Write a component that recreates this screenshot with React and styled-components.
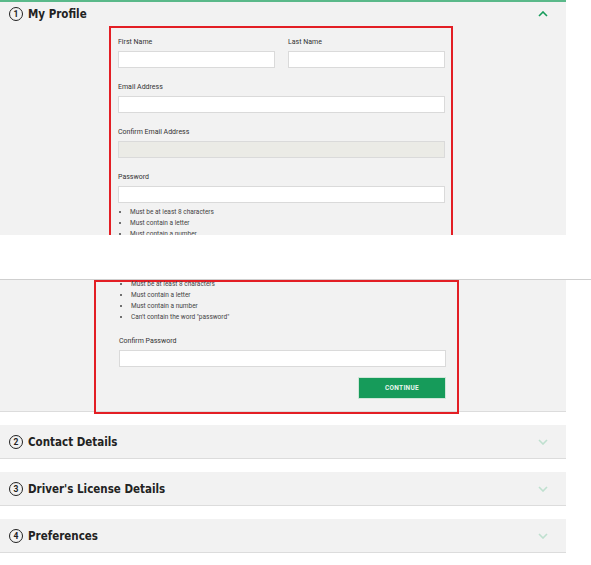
import React from "react";
import styled, { createGlobalStyle } from "styled-components";

const Global = createGlobalStyle`
  html, body { margin: 0; padding: 0; background: #fff; }
  body { font-family: "Roboto", "Liberation Sans", sans-serif; color: #222; }
`;

const Page = styled.div`
  width: 591px;
  display: flex;
  flex-direction: column;
`;

const Panel = styled.section`
  width: 566px;
  box-sizing: border-box;
  background: #f2f2f2;
  border-top: ${p => (p.$active ? "2px solid #5ab98a" : "none")};
  border-bottom: ${p => (p.$cut ? "none" : "1px solid #dcdcdc")};
  height: ${p => p.$h}px;
  overflow: ${p => (p.$cut ? "hidden" : "visible")};
  margin-top: ${p => p.$mt || 0}px;
  display: flex;
  flex-direction: column;
`;

const Header = styled.div`
  height: ${p => p.$h || 33}px;
  display: flex;
  align-items: center;
  padding: 0 18px 0 9px;
  flex-shrink: 0;
`;

const Num = styled.span`
  width: 12px;
  height: 12px;
  border: 1.4px solid #222;
  border-radius: 50%;
  font-size: 8.5px;
  font-weight: 700;
  display: inline-flex;
  align-items: center;
  justify-content: center;
  margin-right: 5px;
`;

const Title = styled.span`
  font-size: 11.5px;
  font-weight: 700;
  flex: 1;
  font-family: "DejaVu Sans Condensed", "Roboto", sans-serif;
`;

const Chevron = ({ up, color }) => (
  <svg width="10" height="6" viewBox="0 0 10 6">
    <path d={up ? "M1 5 L5 1 L9 5" : "M1 1 L5 5 L9 1"} fill="none" stroke={color} strokeWidth="1.6" />
  </svg>
);

const Outline = styled.div`
  box-sizing: border-box;
  border: 2px solid #e31e24;
  width: ${p => p.$w}px;
  margin-left: ${p => p.$ml}px;
  padding: ${p => p.$pad};
  display: flex;
  flex-direction: column;
  flex-shrink: 0;
  margin-bottom: ${p => p.$mb || 0}px;
`;

const Row = styled.div`
  display: flex;
  gap: 13px;
`;

const Field = styled.div`
  flex: 1;
  display: flex;
  flex-direction: column;
  margin-bottom: ${p => p.$mb ?? 15}px;
`;

const Label = styled.label`
  font-size: 7px;
  color: #333;
  margin-bottom: 4px;
  line-height: 9px;
`;

const Input = styled.div`
  height: 17px;
  box-sizing: border-box;
  border: 1px solid #dadada;
  background: ${p => (p.$disabled ? "#ebebe6" : "#fff")};
`;

const Rules = styled.ul`
  margin: 0;
  padding: 0 0 0 12px;
  list-style: disc;
  font-size: 6.5px;
  color: #444;
  line-height: 11px;
  li::marker { font-size: 7px; }
`;

const Gap = styled.div`
  height: 44px;
  border-bottom: 1px solid #cfcfcf;
`;

const Actions = styled.div`
  display: flex;
  justify-content: flex-end;
`;

const Button = styled.button`
  width: 88px;
  height: 22px;
  border: 1px solid #cfe6d8;
  background: #169b5a;
  color: #e8f5ee;
  font-size: 6.5px;
  font-weight: 700;
  letter-spacing: 0.3px;
  font-family: "Roboto", sans-serif;
`;

const rules = ["Must be at least 8 characters", "Must contain a letter", "Must contain a number"];

export default function App() {
  return (
    <Page>
      <Global />
      <Panel $active $cut $h={235}>
        <Header $h={24}>
          <Num>1</Num>
          <Title>My Profile</Title>
          <Chevron up color="#169b5a" />
        </Header>
        <Outline $w={344} $ml={109} $pad="10px 6px 0 7px">
          <Row>
            <Field><Label>First Name</Label><Input /></Field>
            <Field><Label>Last Name</Label><Input /></Field>
          </Row>
          <Field><Label>Email Address</Label><Input /></Field>
          <Field><Label>Confirm Email Address</Label><Input $disabled /></Field>
          <Field $mb={4}><Label>Password</Label><Input /></Field>
          <Rules>{rules.map(r => <li key={r}>{r}</li>)}</Rules>
        </Outline>
      </Panel>
      <Gap />
      <Panel $h={132}>
        <Outline $w={365} $ml={94} $pad="0 11px 13px 23px" $mb={-4}>
          <Rules style={{ marginTop: -3 }}>
            {rules.map(r => <li key={r}>{r}</li>)}
            <li>Can't contain the word "password"</li>
          </Rules>
          <Field $mb={10} style={{ marginTop: 14 }}><Label>Confirm Password</Label><Input /></Field>
          <Actions><Button>CONTINUE</Button></Actions>
        </Outline>
      </Panel>
      {["Contact Details", "Driver's License Details", "Preferences"].map((t, i) => (
        <Panel key={t} $h={34} $mt={i === 0 ? 13 : 13}>
          <Header>
            <Num>{i + 2}</Num>
            <Title>{t}</Title>
            <Chevron color="#bfe0cf" />
          </Header>
        </Panel>
      ))}
    </Page>
  );
}
